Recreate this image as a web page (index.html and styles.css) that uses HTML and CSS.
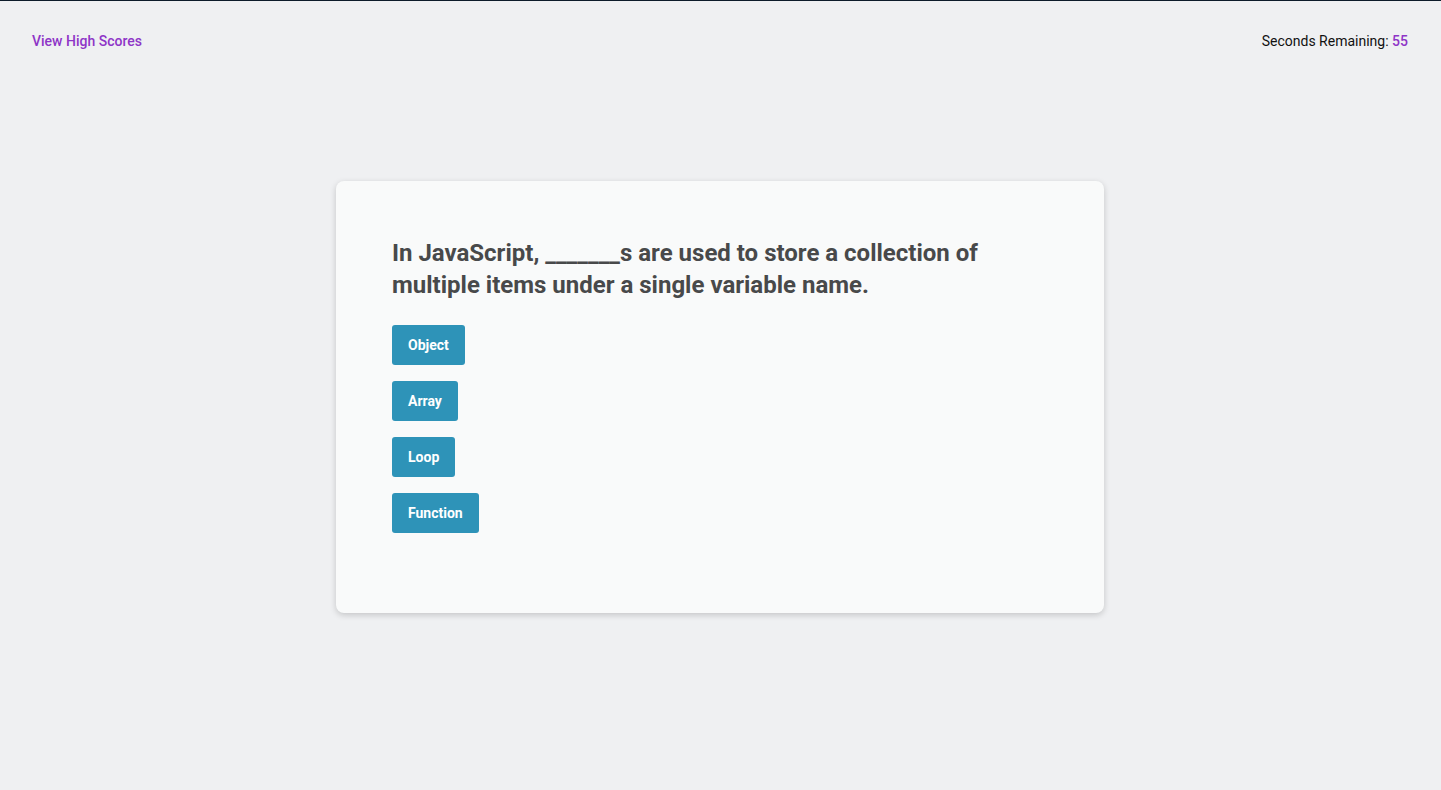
FILE: index.html
```html
<!DOCTYPE html>
<html lang="en">
<head>
<meta charset="utf-8">
<title>Code Quiz</title>
<link rel="stylesheet" href="styles.css">
</head>
<body>
<div class="page">
  <header class="topbar">
    <a class="highscores" href="#">View High Scores</a>
    <div class="timer">Seconds Remaining: <span class="time">55</span></div>
  </header>
  <main class="main">
    <section class="card">
      <h2 class="question">In JavaScript, _______s are used to store a collection of multiple items under a single variable name.</h2>
      <div class="choices">
        <button class="choice">Object</button>
        <button class="choice">Array</button>
        <button class="choice">Loop</button>
        <button class="choice">Function</button>
      </div>
    </section>
  </main>
</div>
</body>
</html>
```

FILE: styles.css
```css
* { box-sizing: border-box; }
html, body {
  margin: 0;
  padding: 0;
  height: 100%;
}
body {
  background: #eff0f2;
  font-family: Roboto, "Noto Sans", sans-serif;
  color: #111;
  border-top: 1px solid #0d1b2a;
}
.page {
  display: flex;
  flex-direction: column;
  height: 100%;
}
.topbar {
  display: flex;
  justify-content: space-between;
  align-items: flex-start;
  padding: 31px 33px 0 32px;
  height: 81px;
  font-size: 14px;
  line-height: 18px;
}
.highscores {
  color: #8e35c7;
  text-decoration: none;
  font-weight: 500;
}
.timer {
  color: #111;
}
.time {
  color: #8e35c7;
  font-weight: 500;
}
.main {
  display: flex;
  justify-content: center;
  padding-top: 99px;
  padding-right: 1px;
}
.card {
  width: 768px;
  height: 432px;
  background: #f9fafa;
  border-radius: 8px;
  box-shadow: 0 2px 6px rgba(0, 0, 0, 0.18);
  padding: 56px 56px 56px;
}
.question {
  margin: 0 0 24px;
  font-size: 24px;
  line-height: 32px;
  font-weight: 700;
  color: #48494a;
}
.choices {
  display: flex;
  flex-direction: column;
  align-items: flex-start;
  gap: 16px;
}
.choice {
  height: 40px;
  padding: 0 16px;
  border: none;
  border-radius: 3px;
  background: #2e93b8;
  color: #fff;
  font-family: Roboto, "Noto Sans", sans-serif;
  font-weight: 700;
  font-size: 14px;
  cursor: pointer;
}
```
